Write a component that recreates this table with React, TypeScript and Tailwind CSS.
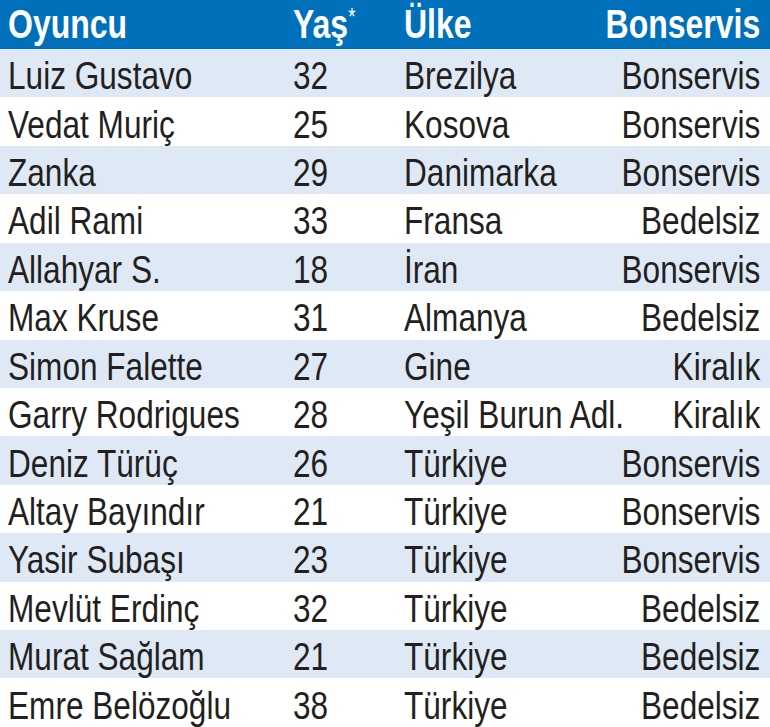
const rows: [string, string, string, string][] = [
  ["Luiz Gustavo", "32", "Brezilya", "Bonservis"],
  ["Vedat Muriç", "25", "Kosova", "Bonservis"],
  ["Zanka", "29", "Danimarka", "Bonservis"],
  ["Adil Rami", "33", "Fransa", "Bedelsiz"],
  ["Allahyar S.", "18", "İran", "Bonservis"],
  ["Max Kruse", "31", "Almanya", "Bedelsiz"],
  ["Simon Falette", "27", "Gine", "Kiralık"],
  ["Garry Rodrigues", "28", "Yeşil Burun Adl.", "Kiralık"],
  ["Deniz Türüç", "26", "Türkiye", "Bonservis"],
  ["Altay Bayındır", "21", "Türkiye", "Bonservis"],
  ["Yasir Subaşı", "23", "Türkiye", "Bonservis"],
  ["Mevlüt Erdinç", "32", "Türkiye", "Bedelsiz"],
  ["Murat Sağlam", "21", "Türkiye", "Bedelsiz"],
  ["Emre Belözoğlu", "38", "Türkiye", "Bedelsiz"],
];

// condensed look: Liberation Sans squeezed horizontally
const Narrow = ({ children, right = false }: { children: React.ReactNode; right?: boolean }) => (
  <span
    className={`inline-block whitespace-nowrap scale-x-[0.81] ${right ? "origin-right" : "origin-left"}`}
  >
    {children}
  </span>
);

const cols = "grid grid-cols-[285px_111px_minmax(0,1fr)_200px] items-center pl-2 pr-[10px]";

export default function App() {
  return (
    <div className="w-[770px] h-[727px] overflow-hidden bg-white font-['Liberation_Sans',Arial,sans-serif] text-[#231f20]">
      <div className={`${cols} h-[49px] bg-[#0070ba] text-white text-[41px] font-bold leading-none`}>
        <div className="min-w-0 scale-x-[0.78] origin-left whitespace-nowrap">Oyuncu</div>
        <div className="min-w-0 scale-x-[0.78] origin-left whitespace-nowrap flex items-start">
          <span>Yaş</span>
          <span className="text-[24px] font-normal mt-[1px]">*</span>
        </div>
        <div className="min-w-0 scale-x-[0.78] origin-left whitespace-nowrap">Ülke</div>
        <div className="min-w-0 flex justify-end">
          <span className="scale-x-[0.78] origin-right whitespace-nowrap">Bonservis</span>
        </div>
      </div>
      {rows.map((r, i) => (
        <div
          key={i}
          className={`${cols} h-[48.43px] pt-[5px] text-[39px] leading-none ${
            i % 2 === 0 ? "bg-[#dfe8f5]" : "bg-white"
          }`}
        >
          <div className="min-w-0"><Narrow>{r[0]}</Narrow></div>
          <div className="min-w-0"><Narrow>{r[1]}</Narrow></div>
          <div className="min-w-0"><Narrow>{r[2]}</Narrow></div>
          <div className="min-w-0 flex justify-end"><Narrow right>{r[3]}</Narrow></div>
        </div>
      ))}
    </div>
  );
}
